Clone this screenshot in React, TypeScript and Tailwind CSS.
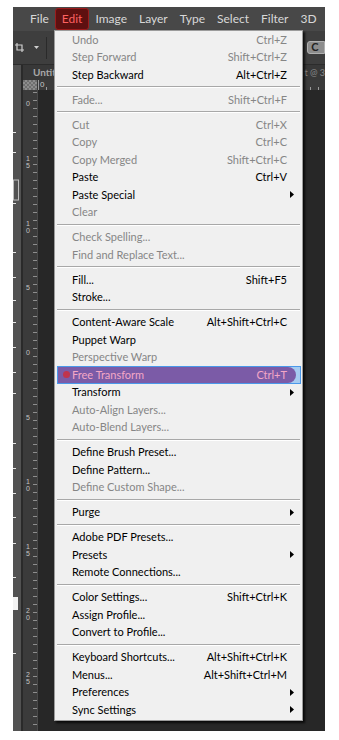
type Row =
  | { label: string; sc?: string; off?: boolean; sub?: boolean; hot?: boolean }
  | "sep";

const rows: Row[] = [
  { label: "Undo", sc: "Ctrl+Z", off: true },
  { label: "Step Forward", sc: "Shift+Ctrl+Z", off: true },
  { label: "Step Backward", sc: "Alt+Ctrl+Z" },
  "sep",
  { label: "Fade...", sc: "Shift+Ctrl+F", off: true },
  "sep",
  { label: "Cut", sc: "Ctrl+X", off: true },
  { label: "Copy", sc: "Ctrl+C", off: true },
  { label: "Copy Merged", sc: "Shift+Ctrl+C", off: true },
  { label: "Paste", sc: "Ctrl+V" },
  { label: "Paste Special", sub: true },
  { label: "Clear", off: true },
  "sep",
  { label: "Check Spelling...", off: true },
  { label: "Find and Replace Text...", off: true },
  "sep",
  { label: "Fill...", sc: "Shift+F5" },
  { label: "Stroke..." },
  "sep",
  { label: "Content-Aware Scale", sc: "Alt+Shift+Ctrl+C" },
  { label: "Puppet Warp" },
  { label: "Perspective Warp", off: true },
  { label: "Free Transform", sc: "Ctrl+T", hot: true },
  { label: "Transform", sub: true },
  { label: "Auto-Align Layers...", off: true },
  { label: "Auto-Blend Layers...", off: true },
  "sep",
  { label: "Define Brush Preset..." },
  { label: "Define Pattern..." },
  { label: "Define Custom Shape...", off: true },
  "sep",
  { label: "Purge", sub: true },
  "sep",
  { label: "Adobe PDF Presets..." },
  { label: "Presets", sub: true },
  { label: "Remote Connections..." },
  "sep",
  { label: "Color Settings...", sc: "Shift+Ctrl+K" },
  { label: "Assign Profile..." },
  { label: "Convert to Profile..." },
  "sep",
  { label: "Keyboard Shortcuts...", sc: "Alt+Shift+Ctrl+K" },
  { label: "Menus...", sc: "Alt+Shift+Ctrl+M" },
  { label: "Preferences", sub: true },
  { label: "Sync Settings", sub: true },
];

const titles = ["File", "Edit", "Image", "Layer", "Type", "Select", "Filter", "3D"];

// ruler labels: y offset inside the vertical ruler, digits stacked
const vLabels: [number, string][] = [
  [10, "0"],
  [65, "15"],
  [130, "10"],
  [194, "5"],
  [259, "0"],
  [324, "5"],
  [388, "10"],
  [453, "15"],
  [517, "20"],
  [581, "25"],
];

const toolDashes = [67, 87, 138, 187, 212, 235, 257, 282, 307, 328, 378, 403, 428, 452, 478, 512, 588];

function Arrow() {
  return (
    <svg width="4" height="7" viewBox="0 0 4 7" aria-hidden>
      <path d="M0 0L4 3.5L0 7Z" fill="#000" />
    </svg>
  );
}

function EditMenu() {
  return (
    <div className="absolute left-[41px] top-[23px] w-[249px] border border-[#9c9c9c] bg-[#f0f0f0] pb-[1px] font-['Lato',sans-serif] text-[11px] shadow-[2px_2px_2px_rgba(0,0,0,0.75)]">
      {rows.map((r, i) => {
        if (r === "sep") {
          return (
            <div key={i} className="flex h-[7.5px] flex-col justify-center px-[2px]">
              <div className="h-px bg-[#a8a8a8]" />
              <div className="h-px bg-white" />
            </div>
          );
        }
        const color = r.hot ? "text-[#f3a7c6]" : r.off ? "text-[#868686]" : "text-black";
        return (
          <div
            key={i}
            className={`relative flex h-[17.5px] items-center justify-between pl-[17px] ${r.sub ? "pr-[8px]" : "pr-[15px]"} ${color}`}
          >
            {r.hot && (
              <div className="absolute inset-y-0 left-[2px] right-[1px] border border-[#4a98ea] bg-[#a6cbf1]">
                <div className="absolute inset-y-0 left-0 right-[4px] rounded-r-full bg-[#7b5ba7]" />
                <div className="absolute left-[5px] top-[4px] h-[7px] w-[7px] rounded-full bg-[#c0344e]" />
              </div>
            )}
            <span className="relative whitespace-nowrap">{r.label}</span>
            {r.sc && <span className="relative whitespace-nowrap">{r.sc}</span>}
            {r.sub && <Arrow />}
          </div>
        );
      })}
    </div>
  );
}

export default function App() {
  return (
    <div className="h-[740px] w-[339px] bg-white pl-[13px] pt-[7px]">
      <div className="relative flex h-[724px] w-[312px] flex-col overflow-hidden bg-[#272727] font-['Lato',sans-serif]">
        {/* menu bar */}
        <div className="flex h-[24px] shrink-0 items-center bg-[#484848] pl-[11px] text-[12px] text-[#d8d8d8]">
          {titles.map((t) =>
            t === "Edit" ? (
              <span
                key={t}
                className="rounded-[3px] border border-[#9b1c1c] bg-[#5e1010] px-[6px] py-[1px] text-[#ff6262]"
              >
                {t}
              </span>
            ) : (
              <span key={t} className="px-[6px]">
                {t}
              </span>
            ),
          )}
        </div>

        {/* options bar */}
        <div className="flex h-[34px] shrink-0 items-center border-b border-[#2c2c2c] bg-[#3e3e3e] pl-[2px]">
          <svg width="9" height="9" viewBox="0 0 9 9" aria-hidden>
            <path d="M2 0V7H9M0 2H7V9" stroke="#cfcfcf" strokeWidth="1.2" fill="none" />
          </svg>
          <svg width="5" height="3" viewBox="0 0 5 3" className="ml-[10px]" aria-hidden>
            <path d="M0 0H5L2.5 3Z" fill="#cfcfcf" />
          </svg>
          <div className="ml-[7px] h-[22px] w-px bg-[#2a2a2a]" />
          <div className="ml-[7px] h-[17px] w-[30px] rounded-[3px] border border-[#666] bg-[#454545]" />
          <div className="flex-1" />
          <div className="flex h-[13px] w-[18px] items-center justify-center rounded-l-[3px] border border-[#b0b0b0] bg-[#8d8d8d] pr-[2px] text-[11px] font-bold text-[#222]">
            C
          </div>
        </div>

        <div className="flex min-h-0 flex-1">
          {/* tools panel edge */}
          <div className="relative w-[8px] shrink-0 bg-[#525252]">
            <svg width="8" height="666" className="absolute left-0 top-0" aria-hidden>
              {toolDashes.map((y) => (
                <rect key={y} x="0" y={y} width="3" height="1" fill="#e8e8e8" />
              ))}
              <rect x="0.5" y="115" width="5" height="20" fill="none" stroke="#bdbdbd" />
              <rect x="0" y="532" width="5" height="13" fill="#f2f2f2" />
            </svg>
          </div>
          <div className="w-[2px] shrink-0 bg-[#2a2a2a]" />

          <div className="flex min-w-0 flex-1 flex-col">
            {/* document tab */}
            <div className="flex h-[15px] shrink-0 items-center justify-between bg-[#383838] pl-[10px] text-[10px] font-bold text-[#a9a9a9]">
              <span className="whitespace-nowrap">Untit</span>
              <span className="whitespace-nowrap text-[9px] font-normal text-[#8a8a8a]">t @ 3</span>
            </div>

            {/* top ruler */}
            <div className="flex h-[10px] shrink-0">
              <div className="w-[14px] shrink-0 bg-[repeating-conic-gradient(#8c8c8c_0%_25%,#6e6e6e_0%_50%)] bg-[length:4px_4px]" />
              <div className="relative flex-1 bg-[#3b3b3b]">
                <svg width="288" height="10" className="absolute left-0 top-0" aria-hidden>
                  {Array.from({ length: 37 }, (_, i) => (
                    <rect key={i} x={1 + i * 8} y={i % 4 === 0 ? 0 : 7} width="1" height={i % 4 === 0 ? 10 : 3} fill="#9a9a9a" />
                  ))}
                  <text x="3" y="7" fontSize="8" fill="#c8c8c8" fontFamily="Liberation Sans, sans-serif">
                    0
                  </text>
                </svg>
              </div>
            </div>

            <div className="flex min-h-0 flex-1">
              {/* vertical ruler */}
              <div className="relative w-[14px] shrink-0 bg-[#3b3b3b]">
                <svg width="14" height="641" className="absolute left-0 top-0" aria-hidden>
                  {Array.from({ length: 81 }, (_, i) => (
                    <rect key={i} x="10" y={2 + i * 8} width="4" height="1" fill="#8e8e8e" />
                  ))}
                  {vLabels.map(([y, s]) => (
                    <text
                      key={y}
                      x="3"
                      y={y + 6}
                      fontSize="7"
                      fill="#c4c4c4"
                      fontFamily="Liberation Sans, sans-serif"
                    >
                      {s.split("").map((d, k) => (
                        <tspan key={k} x="3" dy={k === 0 ? 0 : 7}>
                          {d}
                        </tspan>
                      ))}
                    </text>
                  ))}
                </svg>
              </div>
              <div className="w-px shrink-0 bg-[#4a4a4a]" />
              <div className="flex-1 bg-[#272727]" />
            </div>
          </div>
        </div>

        <EditMenu />
      </div>
    </div>
  );
}
